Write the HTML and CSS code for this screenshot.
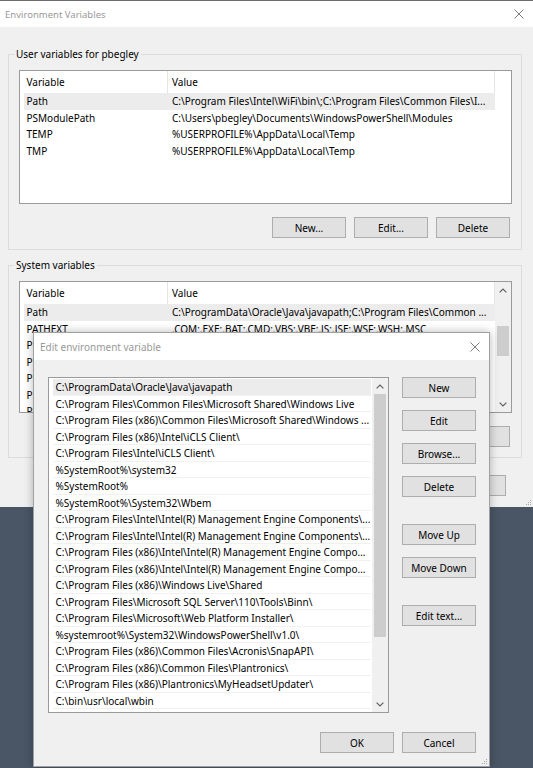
FILE: index.html
```html
<!DOCTYPE html>
<html lang="en">
<head>
<meta charset="utf-8">
<title>Environment Variables</title>
<link rel="stylesheet" href="styles.css">
</head>
<body>
<div class="window main">
  <div class="titlebar">
    <span class="title">Environment Variables</span>
    <svg class="close" width="10" height="10" viewBox="0 0 10 10"><path d="M0.5 0.5L9.5 9.5M9.5 0.5L0.5 9.5"/></svg>
  </div>
  <div class="main-body">
    <fieldset class="group user">
      <legend>User variables for pbegley</legend>
      <div class="listview user-list">
        <div class="lv-content">
          <div class="lv-header"><span class="h1">Variable</span><span class="h2">Value</span></div>
          <div class="lv-row sel"><span class="c1">Path</span><span class="c2">C:\Program Files\Intel\WiFi\bin\;C:\Program Files\Common Files\I...</span></div>
          <div class="lv-row"><span class="c1">PSModulePath</span><span class="c2">C:\Users\pbegley\Documents\WindowsPowerShell\Modules</span></div>
          <div class="lv-row"><span class="c1">TEMP</span><span class="c2">%USERPROFILE%\AppData\Local\Temp</span></div>
          <div class="lv-row"><span class="c1">TMP</span><span class="c2">%USERPROFILE%\AppData\Local\Temp</span></div>
        </div>
      </div>
      <div class="btnrow">
        <button class="btn">New...</button>
        <button class="btn">Edit...</button>
        <button class="btn">Delete</button>
      </div>
    </fieldset>
    <fieldset class="group system">
      <legend>System variables</legend>
      <div class="listview sys-list">
        <div class="lv-content">
          <div class="lv-header"><span class="h1">Variable</span><span class="h2">Value</span></div>
          <div class="lv-row sel"><span class="c1">Path</span><span class="c2">C:\ProgramData\Oracle\Java\javapath;C:\Program Files\Common ...</span></div>
          <div class="lv-row"><span class="c1">PATHEXT</span><span class="c2">.COM;.EXE;.BAT;.CMD;.VBS;.VBE;.JS;.JSE;.WSF;.WSH;.MSC</span></div>
          <div class="lv-row"><span class="c1">PROCESSOR_ARCHITECTURE</span><span class="c2">AMD64</span></div>
          <div class="lv-row"><span class="c1">PROCESSOR_IDENTIFIER</span><span class="c2">Intel64 Family 6 Model 60 Stepping 3, GenuineIntel</span></div>
          <div class="lv-row"><span class="c1">PROCESSOR_LEVEL</span><span class="c2">6</span></div>
          <div class="lv-row"><span class="c1">PROCESSOR_REVISION</span><span class="c2">3c03</span></div>
          <div class="lv-row"><span class="c1">PSModulePath</span><span class="c2">%ProgramFiles%\WindowsPowerShell\Modules</span></div>
        </div>
        <div class="vscroll">
          <div class="sb-btn"><svg width="8" height="5" viewBox="0 0 8 5"><path d="M0.6 4.4L4 1L7.4 4.4"/></svg></div>
          <div class="sb-track"><div class="sb-thumb sys-thumb"></div></div>
          <div class="sb-btn"><svg width="8" height="5" viewBox="0 0 8 5"><path d="M0.6 0.6L4 4L7.4 0.6"/></svg></div>
        </div>
      </div>
      <div class="btnrow">
        <button class="btn">New...</button>
        <button class="btn">Edit...</button>
        <button class="btn">Delete</button>
      </div>
    </fieldset>
    <div class="btnrow footer">
      <button class="btn">OK</button>
      <button class="btn">Cancel</button>
    </div>
  </div>
  <svg class="grip" width="7" height="7" viewBox="0 0 7 7"><rect x="5" y="1" width="1" height="1"/><rect x="3" y="3" width="1" height="1"/><rect x="5" y="3" width="1" height="1"/><rect x="1" y="5" width="1" height="1"/><rect x="3" y="5" width="1" height="1"/><rect x="5" y="5" width="1" height="1"/></svg>
</div>

<div class="window dialog">
  <div class="titlebar">
    <span class="title">Edit environment variable</span>
    <svg class="close" width="10" height="10" viewBox="0 0 10 10"><path d="M0.5 0.5L9.5 9.5M9.5 0.5L0.5 9.5"/></svg>
  </div>
  <div class="dlg-body">
    <div class="dlg-main">
      <div class="edit-list">
        <div class="el-content">
          <div class="el-row sel">C:\ProgramData\Oracle\Java\javapath</div>
          <div class="el-row">C:\Program Files\Common Files\Microsoft Shared\Windows Live</div>
          <div class="el-row">C:\Program Files (x86)\Common Files\Microsoft Shared\Windows ...</div>
          <div class="el-row">C:\Program Files (x86)\Intel\iCLS Client\</div>
          <div class="el-row">C:\Program Files\Intel\iCLS Client\</div>
          <div class="el-row">%SystemRoot%\system32</div>
          <div class="el-row">%SystemRoot%</div>
          <div class="el-row">%SystemRoot%\System32\Wbem</div>
          <div class="el-row">C:\Program Files\Intel\Intel(R) Management Engine Components\...</div>
          <div class="el-row">C:\Program Files\Intel\Intel(R) Management Engine Components\I...</div>
          <div class="el-row">C:\Program Files (x86)\Intel\Intel(R) Management Engine Compon...</div>
          <div class="el-row">C:\Program Files (x86)\Intel\Intel(R) Management Engine Compon...</div>
          <div class="el-row">C:\Program Files (x86)\Windows Live\Shared</div>
          <div class="el-row">C:\Program Files\Microsoft SQL Server\110\Tools\Binn\</div>
          <div class="el-row">C:\Program Files\Microsoft\Web Platform Installer\</div>
          <div class="el-row">%systemroot%\System32\WindowsPowerShell\v1.0\</div>
          <div class="el-row">C:\Program Files (x86)\Common Files\Acronis\SnapAPI\</div>
          <div class="el-row">C:\Program Files (x86)\Common Files\Plantronics\</div>
          <div class="el-row">C:\Program Files (x86)\Plantronics\MyHeadsetUpdater\</div>
          <div class="el-row">C:\bin\usr\local\wbin</div>
          <div class="el-row">%SYSTEMROOT%\System32\WindowsPowerShell\v1.0\</div>
        </div>
        <div class="vscroll">
          <div class="sb-btn"><svg width="8" height="5" viewBox="0 0 8 5"><path d="M0.6 4.4L4 1L7.4 4.4"/></svg></div>
          <div class="sb-track"><div class="sb-thumb el-thumb"></div></div>
          <div class="sb-btn"><svg width="8" height="5" viewBox="0 0 8 5"><path d="M0.6 0.6L4 4L7.4 0.6"/></svg></div>
        </div>
      </div>
      <div class="btncol">
        <button class="btn">New</button>
        <button class="btn">Edit</button>
        <button class="btn">Browse...</button>
        <button class="btn">Delete</button>
        <button class="btn gap-lg">Move Up</button>
        <button class="btn">Move Down</button>
        <button class="btn gap-lg">Edit text...</button>
      </div>
    </div>
    <div class="dlg-footer">
      <button class="btn">OK</button>
      <button class="btn">Cancel</button>
    </div>
  </div>
  <svg class="grip" width="7" height="7" viewBox="0 0 7 7"><rect x="5" y="1" width="1" height="1"/><rect x="3" y="3" width="1" height="1"/><rect x="5" y="3" width="1" height="1"/><rect x="1" y="5" width="1" height="1"/><rect x="3" y="5" width="1" height="1"/><rect x="5" y="5" width="1" height="1"/></svg>
</div>
</body>
</html>
```

FILE: styles.css
```css
* { box-sizing: border-box; }

html, body { margin: 0; padding: 0; }

body {
  width: 533px;
  height: 768px;
  overflow: hidden;
  position: relative;
  background: #4a5665;
  font-family: "Noto Sans", "Open Sans", "DejaVu Sans", sans-serif;
  font-size: 10px;
  color: #000;
}

.window {
  background: #f0f0f0;
  position: relative;
  display: flex;
  flex-direction: column;
}

.main {
  width: 533px;
  height: 507px;
  border-top: 1px solid #6b6b6b;
}

.titlebar {
  height: 26px;
  flex: none;
  background: #fff;
  display: flex;
  align-items: center;
  justify-content: space-between;
  padding: 0 9px 0 5px;
}

.title { color: #999; white-space: nowrap; font-size: 9.5px; }

.close path { stroke: #7a7a7a; stroke-width: 1; fill: none; }

.main-body {
  flex: 1;
  padding: 19px 11px 11px 8px;
  display: flex;
  flex-direction: column;
}

.group {
  margin: 0;
  min-width: 0;
  border: 1px solid #dcdcdc;
  padding: 8px 9px 11px 10px;
}

.group legend {
  margin-left: -5px;
  padding: 0 2px;
  height: 16px;
  line-height: 16px;
  white-space: nowrap;
}

.system { margin-top: 7px; padding-bottom: 10px; }

.listview {
  border: 1px solid #9a9a9a;
  background: #fff;
  display: flex;
  overflow: hidden;
}

.user-list { height: 134px; }
.sys-list { height: 132px; }

.lv-content { flex: 1; min-width: 0; overflow: hidden; }

.lv-header {
  display: grid;
  grid-template-columns: 147px 328px;
  height: 22px;
  line-height: 22px;
}

.h1 { padding-left: 6.5px; }
.h2 {
  padding-left: 4px;
  border-left: 1px solid #e5e5e5;
  border-right: 1px solid #e5e5e5;
}

.lv-row {
  display: grid;
  grid-template-columns: 143px 328px;
  width: 471px;
  height: 16.5px;
  line-height: 16.5px;
  margin-left: 4px;
  white-space: nowrap;
}

.lv-row span { overflow: hidden; text-overflow: ellipsis; }
.c1 { padding-left: 2.5px; }
.c2 { padding-left: 5px; }

.sel { background: #ececec; }

.vscroll {
  width: 16px;
  flex: none;
  background: #f0f0f0;
  display: flex;
  flex-direction: column;
}

.sb-btn {
  height: 16px;
  flex: none;
  display: flex;
  align-items: center;
  justify-content: center;
}

.sb-btn path { stroke: #606060; stroke-width: 1.2; fill: none; }

.sb-track { flex: 1; }

.sb-thumb { margin: 0 2px; background: #cdcdcd; }
.sys-thumb { margin-top: 28px; height: 30px; }
.el-thumb { height: 243px; }

.btn {
  width: 74px;
  height: 21px;
  flex: none;
  padding: 0;
  margin: 0;
  background: #e1e1e1;
  border: 1px solid #adadad;
  border-radius: 0;
  font: inherit;
  color: #000;
  display: flex;
  align-items: center;
  justify-content: center;
  white-space: nowrap;
}

.btnrow {
  display: flex;
  justify-content: flex-end;
  gap: 8px;
  margin-top: 13px;
  margin-right: 2px;
}

.footer { margin-top: 17px; margin-right: 16px; }

.grip {
  position: absolute;
  right: 1px;
  bottom: 1px;
}
.grip rect { fill: #a8a8a8; }

.dialog {
  position: absolute;
  left: 33px;
  top: 332px;
  width: 457px;
  height: 435px;
  border: 1px solid #a0a0a0;
  box-shadow: 0 0 9px rgba(0, 0, 0, 0.28);
}

.dialog .titlebar { height: 27px; padding: 0 9px 0 6px; }
.dialog .title { font-size: 10px; }

.dlg-body {
  flex: 1;
  padding: 17px 13px 0 14px;
  display: flex;
  flex-direction: column;
}

.dlg-main { display: flex; }

.edit-list {
  width: 341px;
  height: 336px;
  flex: none;
  border: 1px solid #9a9a9a;
  background: #fff;
  display: flex;
  overflow: hidden;
}

.el-content {
  flex: 1;
  min-width: 0;
  padding: 1px 0 0 4px;
  overflow: hidden;
}

.el-row {
  width: 318px;
  height: 16.5px;
  line-height: 16px;
  padding-left: 2.5px;
  border-bottom: 1px solid #f1f1f1;
  white-space: nowrap;
  overflow: hidden;
  text-overflow: ellipsis;
}

.btncol {
  margin-left: 13px;
  display: flex;
  flex-direction: column;
  gap: 12px;
}

.btncol .gap-lg { margin-top: 15px; }

.dlg-footer {
  display: flex;
  justify-content: flex-end;
  gap: 8px;
  margin-top: 19px;
}
```
